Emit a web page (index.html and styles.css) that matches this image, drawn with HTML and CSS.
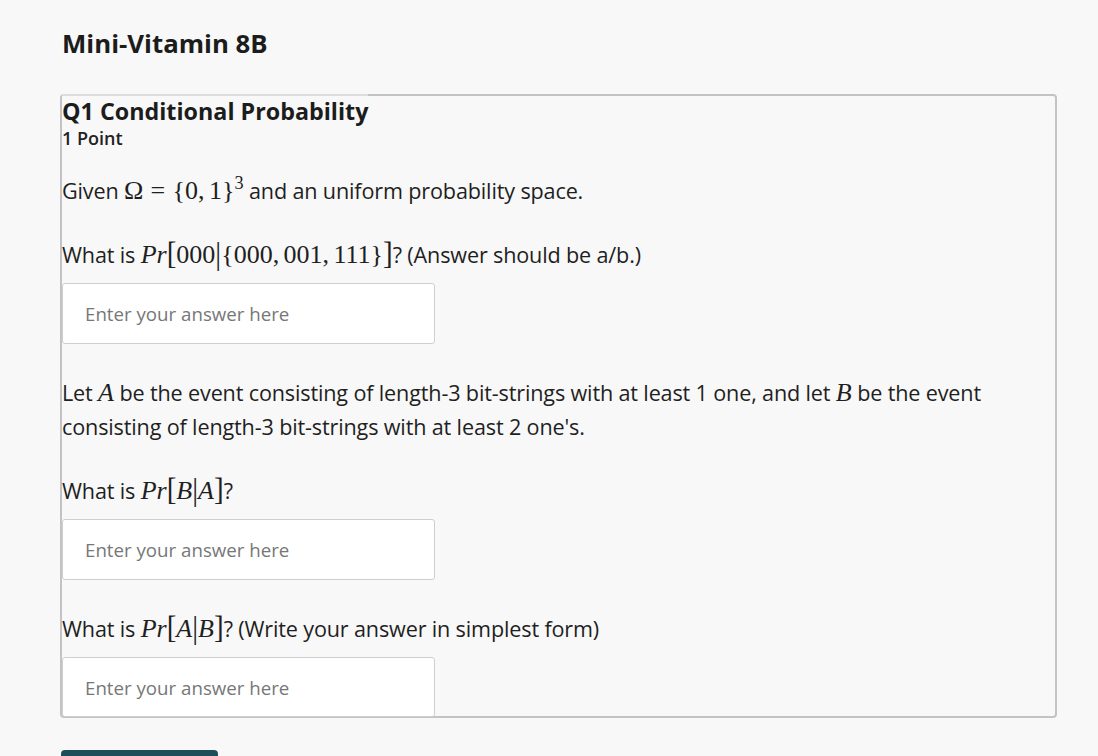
FILE: index.html
```html
<!DOCTYPE html>
<html lang="en">
<head>
<meta charset="utf-8">
<title>Mini-Vitamin 8B</title>
<link rel="stylesheet" href="styles.css">
</head>
<body>
<main class="page">
  <h1 class="title">Mini-Vitamin 8B</h1>
  <section class="card">
    <header class="q-head">
      <h2 class="q-title">Q1 Conditional Probability</h2>
      <div class="q-points">1 Point</div>
    </header>
    <div class="q-body">
      <p class="txt gap-lg">Given <span class="m">Ω<span class="rel">=</span>{0,<span class="th"></span>1}<sup class="sup">3</sup></span> and an uniform probability space.</p>
      <p class="txt gap-sm">What is <span class="m"><i>Pr</i><span class="big">[</span>000<span class="big">|</span>{000,<span class="th"></span>001,<span class="th"></span>111}<span class="big">]</span></span>? (Answer should be a/b.)</p>
      <input class="answer gap-in" type="text" placeholder="Enter your answer here">
      <p class="txt gap-lg">Let <span class="m"><i>A</i></span> be the event consisting of length-3 bit-strings with at least 1 one, and let <span class="m"><i>B</i></span> be the event consisting of length-3 bit-strings with at least 2 one's.</p>
      <p class="txt gap-sm">What is <span class="m"><i>Pr</i><span class="big">[</span><i>B</i><span class="big">|</span><i>A</i><span class="big">]</span></span>?</p>
      <input class="answer gap-in" type="text" placeholder="Enter your answer here">
      <p class="txt gap-sm">What is <span class="m"><i>Pr</i><span class="big">[</span><i>A</i><span class="big">|</span><i>B</i><span class="big">]</span></span>? (Write your answer in simplest form)</p>
      <input class="answer last" type="text" placeholder="Enter your answer here">
    </div>
  </section>
  <button class="submit" type="button" aria-label="Save Answer"></button>
</main>
</body>
</html>
```

FILE: styles.css
```css
html, body {
  margin: 0;
  padding: 0;
  background: #f8f8f8;
}
body {
  font-family: "Open Sans", "Noto Sans", sans-serif;
  color: #1f1f1f;
}
.page {
  padding: 27px 41px 0 60px;
}
.title {
  margin: 0 0 35px 2px;
  font-size: 25.8px;
  line-height: 32px;
  font-weight: 700;
  color: #1c1c1c;
}
.card {
  border: 2px solid #c3c3c7;
  border-radius: 4px;
  display: flex;
  flex-direction: column;
  align-items: flex-start;
}
.q-head {
  margin-top: -2px;
  border-top: 2px solid #dcdcdc;
  background: #f8f8f8;
}
.q-title {
  margin: 0;
  font-size: 23.3px;
  line-height: 30px;
  font-weight: 700;
  color: #1c1c1c;
}
.q-points {
  font-size: 18px;
  line-height: 25px;
  font-weight: 600;
  color: #222;
}
.q-body {
  margin-top: 23px;
  display: flex;
  flex-direction: column;
  align-items: flex-start;
  width: 100%;
}
.txt {
  margin: 0;
  font-size: 21.6px;
  line-height: 34px;
  letter-spacing: -0.15px;
  color: #1f1f1f;
}
.gap-lg { margin-bottom: 30px; }
.gap-sm { margin-bottom: 11px; }
.gap-in { margin-bottom: 32px; }
.m {
  font-family: "Liberation Serif", "DejaVu Serif", serif;
  font-size: 26px;
  letter-spacing: 0;
  white-space: nowrap;
  line-height: 0;
}
.m i {
  font-style: italic;
}
.rel {
  padding: 0 0.28em;
}
.th {
  display: inline-block;
  width: 0.17em;
}
.sup {
  font-size: 0.7em;
  vertical-align: 0.55em;
  line-height: 0;
}
.big {
  font-size: 1.12em;
  display: inline-block;
  transform: scaleY(1.1);
  line-height: 0;
}
.answer {
  box-sizing: border-box;
  width: 373px;
  height: 61px;
  margin-top: 0;
  padding: 0 22px;
  border: 1px solid #cfcfcf;
  border-radius: 3px;
  background: #fff;
  font-family: "Open Sans", "Noto Sans", sans-serif;
  font-size: 18.7px;
  color: #222;
  outline: none;
}
.answer::placeholder {
  color: #777;
}
.answer.last {
  height: 60px;
  margin-bottom: -1px;
}
.submit {
  display: block;
  margin-top: 32px;
  margin-left: 1px;
  width: 157px;
  height: 40px;
  border: none;
  border-radius: 4px;
  background: #1e4e5a;
}
```
